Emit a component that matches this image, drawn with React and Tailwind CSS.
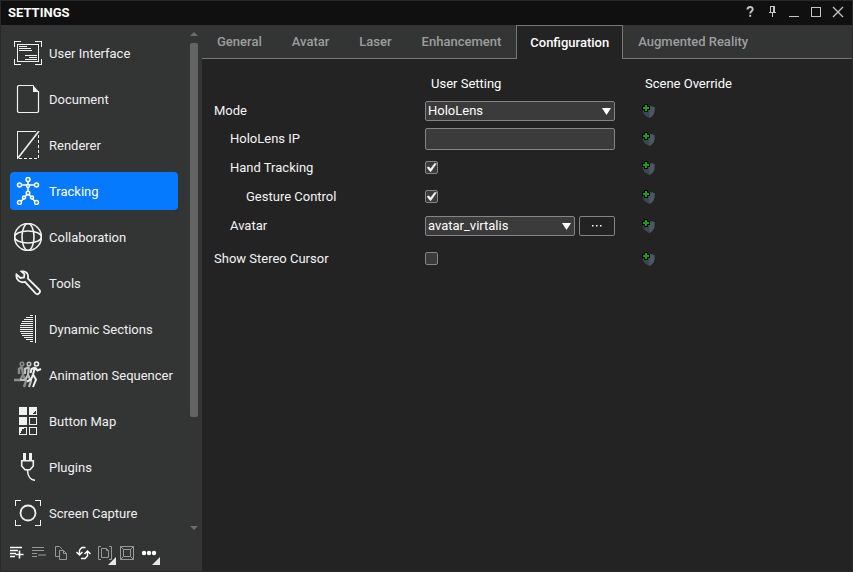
import { useState } from 'react';

const icons = {
  ui: (
    <g shapeRendering="crispEdges">
      <path d="M7 2.5H.5V8M21 2.5h6.5V8M.5 20v5.5H7M27.5 20v5.5H21" />
      <rect x="3.5" y="5.5" width="21" height="17" />
      <path d="M5 7.5h8M5 9.5h12M5 11.5h13M11 16.5h12M15 18.5h8M11 20.5h12" />
    </g>
  ),
  document: (
    <>
      <path d="M19.5.5h-15l-1 1v25l1 1h19l1-1V6" strokeWidth="1.2" />
      <path d="M19 0v7h6z" fill="currentColor" stroke="none" />
    </>
  ),
  renderer: (
    <>
      <path d="M3.5 28V.5H22" shapeRendering="crispEdges" />
      <path d="M25 0 4 27" strokeWidth="1.6" />
      <path d="M24.5 4v24M5 27.5h19" strokeDasharray="3 2" shapeRendering="crispEdges" />
    </>
  ),
  tracking: (
    <>
      <path d="M14 4v10M7 8h14M13 17.5 7 24.5M15 17.5l6 7" strokeWidth="1.6" />
      <g fill="#2080ff" strokeWidth="1.5">
        <circle cx="14" cy="2.5" r="2" />
        <circle cx="14" cy="9" r="1.4" />
        <circle cx="5.5" cy="8" r="2" />
        <circle cx="22.5" cy="8" r="2" />
        <circle cx="14" cy="16" r="1.8" />
        <circle cx="10" cy="20.5" r="1.5" />
        <circle cx="18" cy="20.5" r="1.5" />
        <circle cx="5.5" cy="25.5" r="2" />
        <circle cx="22.5" cy="25.5" r="2" />
      </g>
    </>
  ),
  collaboration: (
    <g strokeWidth="1.6">
      <circle cx="14" cy="14" r="13.5" />
      <ellipse cx="14" cy="14" rx="6" ry="13.5" />
      <ellipse cx="14" cy="14" rx="13.5" ry="6" />
    </g>
  ),
  tools: (
    <path
      d="M2.5 5.5 6.5 9 10 8.5 10.5 5 7.5 2.5C12 1.5 15 5 13.8 9.5L25 20.5A2.3 2.3 0 0 1 21.6 24.4L11 12.8C6 14.5 1.5 10.5 2.5 5.5Z"
      strokeWidth="1.8"
    />
  ),
  sections: (
    <path
      shapeRendering="crispEdges"
      d="M16 .5h3M12 2.5h7M10 4.5h9M8 6.5h11M7 8.5h12M6 10.5h13M6 12.5h13M6 14.5h13M6 16.5h13M7 18.5h12M8 20.5h11M10 22.5h9M12 24.5h7M16 26.5h3M21.5 0v28"
    />
  ),
  animation: (
    <>
      <g stroke="#8b8d8d">
        <circle cx="8" cy="3" r="1.8" strokeWidth="1.5" />
        <path d="M8 6 5 8v5M8 6l1 8-3 5H0M9 14l3 6-2 6" strokeWidth="2.4" />
      </g>
      <g stroke="#bcbdbd">
        <circle cx="15" cy="3" r="1.8" strokeWidth="1.5" />
        <path d="M15 6 11 8v5M15 6l-1 8-3 5H6M14 14l3 6-2 6" strokeWidth="2.2" />
      </g>
      <circle cx="22.5" cy="3" r="2" strokeWidth="1.6" />
      <path d="M21 6.5 17.5 8l-1 4M21 6.5l2.5 3L27 8M21 6.5l-2 7-2 5-4 2M19 13.5l3 5-3 7.5" strokeWidth="2" />
    </>
  ),
  buttons: (
    <g shapeRendering="crispEdges">
      <path d="M5 0h8v8H5zM15 0h8v8h-8zM5 10h8v8H5z" fill="currentColor" stroke="none" />
      <path d="M22 4v3h-4z" fill="#333535" stroke="none" />
      <rect x="15.5" y="10.5" width="7" height="7" />
      <rect x="5.5" y="20.5" width="7" height="7" />
      <rect x="15.5" y="20.5" width="7" height="7" />
      <path d="M5 20h5v2H8v2H7v2H5z" fill="currentColor" stroke="none" />
    </g>
  ),
  plugins: (
    <>
      <path d="M9 0h3v8H9zM15 0h3v8h-3z" fill="currentColor" stroke="none" />
      <path d="M7.7 7.7h11.6V13L16 16.8h-5L7.7 13zM13.5 17c0 6 3 10 7.5 10.3" strokeWidth="1.6" />
    </>
  ),
  capture: (
    <>
      <path d="M7 1.5H1.5V7M21 1.5h5.5V7M1.5 21v5.5H7M26.5 21v5.5H21" shapeRendering="crispEdges" />
      <circle cx="14" cy="14" r="7.5" strokeWidth="1.8" />
    </>
  ),
};

const sections = [
  { name: 'User Interface', icon: 'ui' },
  { name: 'Document', icon: 'document' },
  { name: 'Renderer', icon: 'renderer' },
  { name: 'Tracking', icon: 'tracking' },
  { name: 'Collaboration', icon: 'collaboration' },
  { name: 'Tools', icon: 'tools' },
  { name: 'Dynamic Sections', icon: 'sections' },
  { name: 'Animation Sequencer', icon: 'animation' },
  { name: 'Button Map', icon: 'buttons' },
  { name: 'Plugins', icon: 'plugins' },
  { name: 'Screen Capture', icon: 'capture' },
];

const tabs = ['General', 'Avatar', 'Laser', 'Enhancement', 'Configuration', 'Augmented Reality'];

const windowButtons = [
  { label: 'Help', drawing: <path d="M4.5 4.6C4.5 1.2 9.7 1.2 9.7 4.4 9.7 6.3 7.2 6.4 7.2 8.6M7.2 9.8v2" strokeWidth="1.9" /> },
  { label: 'Pin', drawing: <path d="M5 1.5h5M5.5 1.5v6M8.5 1.5v6M9.5 1.5v6M4 7.5h7M7.5 8v4" shapeRendering="crispEdges" /> },
  { label: 'Minimize', drawing: <path d="M2 11.5h10" shapeRendering="crispEdges" /> },
  { label: 'Maximize', drawing: <path d="M2.5 2.5h9v9h-9z" shapeRendering="crispEdges" /> },
  { label: 'Close', drawing: <path d="M2 2l10 10M12 2 2 12" strokeWidth="1.3" /> },
];

const toolbarButtons = [
  { label: 'Add', drawing: <path d="M1 2.5h12M1 5.5h8M1 8.5h6M1 11.5h5M10.5 5.5v8M6.5 9.5h8" strokeWidth="1.5" /> },
  { label: 'Remove', dim: true, drawing: <path d="M1 2.5h12M1 5.5h12M1 8.5h5M1 11.5h5M7 10h8" strokeWidth="1.2" /> },
  { label: 'Copy', dim: true, drawing: <path d="M6 11.5H2.5v-10h4L9.500 4.500M6.500 5.500h4l3 3v6h-7zM10.500 5.500v3h3" /> },
  { label: 'Reset', drawing: <path d="M10.500 2.500H7L4.500 5v5M1.500 7l3 3 3-3M6 13.500h4l2.500-2.500V6M9.500 9l3-3 3 3" strokeWidth="1.400" /> },
  { label: 'Paste', dim: true, more: true, drawing: <path d="M4 1.500H1.500v13H4M12 1.500h2.500v13H12M4.500 3.500h5l2 2v7h-7zM9.500 3.500v2h2" /> },
  { label: 'Frame', dim: true, drawing: <path d="M1.500 1.500h13v13h-13zM4.500 4.500h7v7h-7zM1.500 1.500l3 3M14.500 1.500l-3 3M1.500 14.500l3-3M14.500 14.500l-3-3" /> },
  {
    label: 'More',
    more: true,
    drawing: (
      <g fill="currentColor" stroke="none">
        <circle cx="3" cy="8" r="2.2" />
        <circle cx="8" cy="8" r="2.2" />
        <circle cx="13" cy="8" r="2.2" />
      </g>
    ),
  },
];

function TitleBar() {
  return (
    <header className="flex h-6 shrink-0 items-center justify-between bg-[#101010] pr-[7px] pl-[7px]">
      <h1 className="text-[13px] font-bold text-white">SETTINGS</h1>
      <div className="flex gap-2 pb-0.5">
        {windowButtons.map((button) => (
          <button key={button.label} type="button" aria-label={button.label} className="text-[#c4c4c4]">
            <svg className="size-3.5" viewBox="0 0 14 14" fill="none" stroke="currentColor">
              {button.drawing}
            </svg>
          </button>
        ))}
      </div>
    </header>
  );
}

function Toolbar() {
  return (
    <div className="flex shrink-0 gap-1.5 px-2 pt-3 pb-2.5">
      {toolbarButtons.map((button) => (
        <button
          key={button.label}
          type="button"
          aria-label={button.label}
          className={button.dim ? 'relative text-[#979999]' : 'relative text-white'}
        >
          <svg className="size-4" viewBox="0 0 16 16" fill="none" stroke="currentColor">
            {button.drawing}
          </svg>
          {button.more && (
            <svg className="absolute -right-[3px] -bottom-1 size-2 text-[#e6e6e6]" viewBox="0 0 8 8">
              <path d="M8 0v8H0z" fill="currentColor" />
            </svg>
          )}
        </button>
      ))}
    </div>
  );
}

function Sidebar() {
  const [active, setActive] = useState('Tracking');

  return (
    <aside className="flex w-[201px] shrink-0 flex-col bg-[#333535]">
      <div className="flex min-h-0 flex-1">
        <nav className="flex flex-1 flex-col gap-2 overflow-hidden pt-[9px] pl-[9px]">
          {sections.map((section) => (
            <button
              key={section.name}
              type="button"
              onClick={() => setActive(section.name)}
              className={`flex h-[38px] w-[168px] shrink-0 items-center gap-[7px] rounded-sm pl-1 text-left whitespace-nowrap ${
                active === section.name ? 'bg-[#067aff] text-white' : 'text-[#f0f0f0]'
              }`}
            >
              <svg className="size-7 shrink-0" viewBox="0 0 28 28" fill="none" stroke="currentColor">
                {icons[section.icon]}
              </svg>
              <span className="pt-0.5">{section.name}</span>
            </button>
          ))}
        </nav>
        {/* Scrollbar */}
        <div className="mr-1 flex w-2 flex-col items-center pt-[7px] pb-[3px] text-[#6b6d6d]">
          <svg className="h-1 w-2 shrink-0" viewBox="0 0 8 4">
            <path d="M0 4l4-4 4 4z" fill="currentColor" />
          </svg>
          <div className="mt-[7px] mb-1 w-2 flex-1">
            <div className="h-[78%] rounded-xs bg-[#636565]" />
          </div>
          <svg className="h-1 w-2 shrink-0" viewBox="0 0 8 4">
            <path d="M0 0l4 4 4-4z" fill="currentColor" />
          </svg>
        </div>
      </div>
      <Toolbar />
    </aside>
  );
}

function Select({ id, value, className }) {
  return (
    <div className={`relative ${className}`}>
      <select
        id={id}
        defaultValue={value}
        className="block h-5 w-full appearance-none rounded-xs border border-[#858585] bg-[#3b3b3b] pl-[2px] text-white"
      >
        <option>{value}</option>
      </select>
      <svg className="pointer-events-none absolute top-[7px] right-1 h-[7px] w-[9px]" viewBox="0 0 9 7">
        <path d="M0 0h9L4.5 7z" fill="#fff" />
      </svg>
    </div>
  );
}

function Checkbox({ id, checked }) {
  return (
    <div className="relative size-[13px]">
      <input
        id={id}
        type="checkbox"
        defaultChecked={checked}
        className="peer block size-full appearance-none rounded-xs border border-[#858585] bg-[#3b3b3b]"
      />
      <svg className="pointer-events-none absolute inset-0 hidden size-full peer-checked:block" viewBox="0 0 13 13">
        <path d="M2 6.5 4 5.800l1.500 2L9.500 2.500h2L6 10.500H5z" fill="#f4f4f4" stroke="#f4f4f4" strokeWidth=".4" />
      </svg>
    </div>
  );
}

function OverrideButton({ name }) {
  return (
    <button type="button" aria-label={`Override ${name}`} className="justify-self-start">
      <svg className="block size-4" viewBox="0 0 16 16">
        <path d="M3 5l6-2 5.500 1v4c0 3-2 5-5 7C6 13.500 3.500 12 3 9z" fill="#3d4750" />
        <path d="M9 3l5.500 1v4c0 3-2 5-5 7z" fill="#4b5863" />
        <path d="M4 1h4v2h2v4H8v2H4V7H2V3h2z" fill="#000" />
        <path d="M5 2h2v2h2v2H7v2H5V6H3V4h2z" fill="#0da80d" />
      </svg>
    </button>
  );
}

function Row({ id, label, indent = '', spacing = 'h-[29px]', children }) {
  return (
    <div className={`grid grid-cols-[211px_215px_1fr] items-center ${spacing}`}>
      <label htmlFor={id} className={indent}>{label}</label>
      <div className="flex gap-1">{children}</div>
      <OverrideButton name={label} />
    </div>
  );
}

function ConfigurationPanel() {
  return (
    <form className="flex-1 px-3 pt-[17px] text-[#f4f4f4]">
      <div className="grid h-5 grid-cols-[217px_214px_1fr] text-white">
        <span />
        <span>User Setting</span>
        <span>Scene Override</span>
      </div>
      <Row id="mode" label="Mode">
        <Select id="mode" value="HoloLens" className="w-[190px]" />
      </Row>
      <Row id="ip" label="HoloLens IP" indent="pl-4" spacing="h-7">
        <input
          id="ip"
          type="text"
          className="h-[22px] w-[190px] rounded-xs border border-[#858585] bg-[#3b3b3b] px-1"
        />
      </Row>
      <Row id="hand" label="Hand Tracking" indent="pl-4">
        <Checkbox id="hand" checked />
      </Row>
      <Row id="gesture" label="Gesture Control" indent="pl-8">
        <Checkbox id="gesture" checked />
      </Row>
      <Row id="avatar" label="Avatar" indent="pl-4">
        <Select id="avatar" value="avatar_virtalis" className="w-[150px]" />
        <button
          type="button"
          aria-label="Browse avatars"
          className="flex h-5 w-9 items-center justify-center rounded-xs border border-[#858585]"
        >
          <svg className="h-1 w-3" viewBox="0 0 12 4" fill="#fff">
            <path d="M1 1h1.500v1.500H1zM5 1h1.500v1.500H5zM9 1h1.500v1.500H9z" />
          </svg>
        </button>
      </Row>
      <Row id="cursor" label="Show Stereo Cursor" spacing="mt-1 h-[29px]">
        <Checkbox id="cursor" />
      </Row>
    </form>
  );
}

export default function App() {
  const [tab, setTab] = useState('Configuration');

  return (
    <div className="flex h-screen flex-col border border-[#292929] bg-[#232323] font-['Roboto',sans-serif] text-[13px] leading-4">
      <TitleBar />
      <div className="flex min-h-0 flex-1">
        <Sidebar />
        <main className="flex min-w-0 flex-1 flex-col">
          <div role="tablist" className="flex h-[34px] shrink-0 bg-[#333535] font-medium">
            {tabs.map((name) => (
              <button
                key={name}
                type="button"
                role="tab"
                aria-selected={tab === name}
                onClick={() => setTab(name)}
                className={
                  tab === name
                    ? 'border border-b-0 border-[#777] bg-[#232323] px-[13px] text-white'
                    : 'border-b border-[#777] px-[15px] text-[#9c9e9e]'
                }
              >
                {name}
              </button>
            ))}
            <div className="flex-1 border-b border-[#777]" />
          </div>
          <ConfigurationPanel />
        </main>
      </div>
    </div>
  );
}
